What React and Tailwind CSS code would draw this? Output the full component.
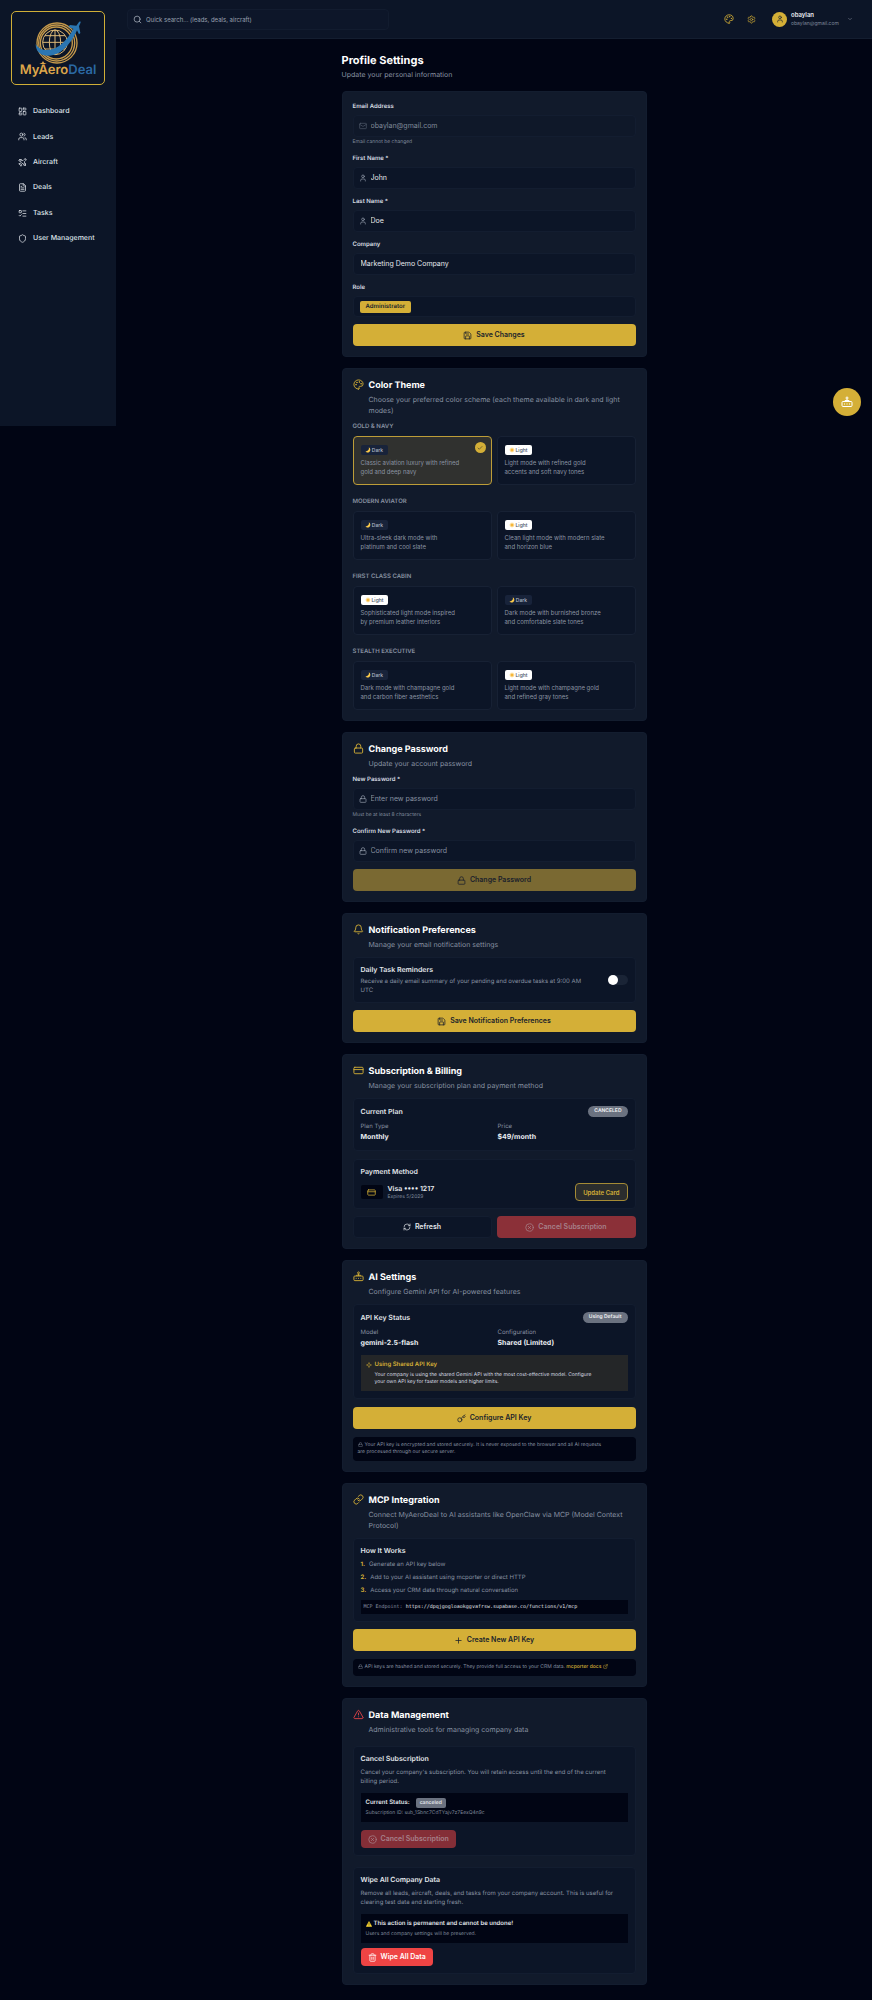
import React from "react";
import {
  Bell,
  Check,
  ChevronDown,
  CircleX,
  CreditCard,
  ExternalLink,
  FileText,
  Key,
  LayoutDashboard,
  Link,
  ListTodo,
  Lock,
  Mail,
  Palette,
  Plus,
  RefreshCw,
  Save,
  Search,
  Settings,
  Shield,
  Sparkle,
  Trash2,
  TriangleAlert,
  User,
  Users,
} from "lucide-react";

const BotIcon = ({ className }) => (
  <svg viewBox="0 0 24 24" fill="none" stroke="currentColor" strokeWidth="2" strokeLinejoin="round" className={className}>
    <circle cx="12" cy="4" r="2" />
    <path d="M12 6v5M8 11V9h8v2M4 11h16a2 2 0 0 1 2 2v6a2 2 0 0 1-2 2H4a2 2 0 0 1-2-2v-6a2 2 0 0 1 2-2z" />
    <path d="M7 15v2M12 15v2M17 15v2" />
  </svg>
);

const JetIcon = ({ className }) => (
  <svg viewBox="0 0 24 24" fill="none" stroke="currentColor" strokeWidth="2" strokeLinecap="round" strokeLinejoin="round" className={className}>
    <path d="M21 3c-1.5-1.5-3.5-.5-5 1l-3 3-9-2-2 2 7 4-3 4-3-.5L2 16l4 2 2 4 1.5-1.5L9 17l4-3 4 7 2-2-2-9 3-3c1.5-1.5 2.5-3 1-4z" />
    <path d="M4 4h5M20 15v5" />
  </svg>
);

const WarningIcon = ({ className }) => (
  <svg viewBox="0 0 24 24" className={className}>
    <path d="M12 2 23 22H1z" fill="#fdd835" stroke="#fdd835" strokeWidth="2" strokeLinejoin="round" />
    <path d="M12 9v6M12 18v2" stroke="#3a3000" strokeWidth="3" />
  </svg>
);

const MoonIcon = () => (
  <svg viewBox="0 0 24 24" className="size-[6px]">
    <path d="M15 1c3 9-3 16-13 16 3 5 9 7 14 4 8-5 7-16-1-20z" fill="#fbc94a" />
  </svg>
);

const SunIcon = () => (
  <svg viewBox="0 0 24 24" className="size-[6px]">
    <path d="M12 0l3 4 5-1-1 5 5 4-5 3 1 5-5-1-3 5-3-5-5 1 1-5-5-3 5-4-1-5 5 1z" fill="#fde7b0" />
    <circle cx="12" cy="12" r="6" fill="#f6b73c" />
  </svg>
);

const navItems = [
  { label: "Dashboard", icon: LayoutDashboard },
  { label: "Leads", icon: Users },
  { label: "Aircraft", icon: JetIcon },
  { label: "Deals", icon: FileText },
  { label: "Tasks", icon: ListTodo },
  { label: "User Management", icon: Shield },
];

const themeGroups = [
  {
    title: "GOLD & NAVY",
    themes: [
      { mode: "Dark", text: "Classic aviation luxury with refined\ngold and deep navy", active: true },
      { mode: "Light", text: "Light mode with refined gold\naccents and soft navy tones" },
    ],
  },
  {
    title: "MODERN AVIATOR",
    themes: [
      { mode: "Dark", text: "Ultra-sleek dark mode with\nplatinum and cool slate" },
      { mode: "Light", text: "Clean light mode with modern slate\nand horizon blue" },
    ],
  },
  {
    title: "FIRST CLASS CABIN",
    themes: [
      { mode: "Light", text: "Sophisticated light mode inspired\nby premium leather interiors" },
      { mode: "Dark", text: "Dark mode with burnished bronze\nand comfortable slate tones" },
    ],
  },
  {
    title: "STEALTH EXECUTIVE",
    themes: [
      { mode: "Dark", text: "Dark mode with champagne gold\nand carbon fiber aesthetics" },
      { mode: "Light", text: "Light mode with champagne gold\nand refined gray tones" },
    ],
  },
];

const steps = [
  "Generate an API key below",
  "Add to your AI assistant using mcporter or direct HTTP",
  "Access your CRM data through natural conversation",
];

const Logo = () => (
  <a href="#" className="flex h-[74px] flex-col items-center rounded-[5px] border border-[#d0ae37] pt-2">
    <svg viewBox="100 58 150 132" className="h-[44px] w-[50px]" fill="none">
      <g stroke="#c79a4b" strokeWidth="4">
        <circle cx="172" cy="127" r="60" />
        <circle cx="171" cy="127" r="54" />
        <circle cx="170" cy="127" r="48" />
      </g>
      <g stroke="#dcb878" strokeWidth="3">
        <circle cx="166" cy="125" r="37" />
        <ellipse cx="166" cy="125" rx="17" ry="37" />
        <path d="M166 88v74M129 125h74M136 105h60M136 145h60" />
      </g>
      <path
        d="M108 130c10 20 42 26 70 6 20-14 34-34 43-51l-15-7 5-5 19 2 6-8c4-6 9-6 6 1l-4 9 4 20-4 4-6-12c-10 24-27 49-50 65-32 20-74 14-74-24z"
        fill="#2b76b2"
      />
      <path d="M130 181l3 5 8 4h-22l8-4z" fill="#dda64a" />
    </svg>
    <span className="text-[13px] leading-[12px] font-semibold text-[#dda64a]">
      MyAero<span className="text-[#2b69a3]">Deal</span>
    </span>
  </a>
);

const Sidebar = () => (
  <aside className="h-[426px] w-[116px] shrink-0 bg-[#0c1527] p-[11px]">
    <Logo />
    <nav className="mt-4 flex h-[148px] flex-col justify-between">
      {navItems.map(({ label, icon: Icon }) => (
        <a key={label} href="#" className="flex h-[21px] items-center gap-[6px] px-[7px] text-[7px] font-medium text-[#dfe3e9]">
          <Icon className="size-[9px]" />
          {label}
        </a>
      ))}
    </nav>
  </aside>
);

const Header = () => (
  <header className="flex h-[39px] items-center justify-between border-b border-[#141e30] bg-[#0c1527] pr-[19px] pl-[11px]">
    <label className="flex h-[21px] w-[262px] items-center gap-1 rounded-[4px] border border-[#121c2f] bg-[#0d1629] px-[5px]">
      <Search className="size-[9px] text-[#a9b1be]" />
      <input
        type="search"
        aria-label="Quick search"
        placeholder="Quick search... (leads, deals, aircraft)"
        className="min-w-0 flex-1 text-[6px] outline-none placeholder:text-[#99a1af]"
      />
    </label>
    <div className="flex items-center">
      <button aria-label="Theme" className="text-[#d4af37]">
        <Palette className="size-[10px]" />
      </button>
      <button aria-label="Settings" className="ml-[13px] text-[#c4a234]">
        <Settings className="size-[9px]" />
      </button>
      <button className="ml-4 flex items-center gap-1 text-left">
        <span className="flex size-[15px] items-center justify-center rounded-full bg-[#d4af37] text-[#141c2c]">
          <User className="size-[8px]" />
        </span>
        <span className="block w-[52px]">
          <span className="block text-[6px] leading-[8px] font-semibold text-[#e8ebf0]">obaylan</span>
          <span className="block text-[5px] leading-[8px] text-[#7f899a]">obaylan@gmail.com</span>
        </span>
        <ChevronDown className="size-[6px] text-[#8a93a2]" />
      </button>
    </div>
  </header>
);

const Card = ({ children }) => (
  <section className="rounded-[4px] border border-[#131d2f] bg-[#111a2b] p-[10px]">{children}</section>
);

const CardHeader = ({ icon: Icon, title, subtitle, iconClass = "text-[#d4af37]" }) => (
  <div className="flex gap-[5px]">
    <Icon strokeWidth={2} className={`size-[11px] shrink-0 ${iconClass}`} />
    <div>
      <h2 className="text-[9px] leading-[14px] font-bold text-white">{title}</h2>
      <p className="mt-px text-[7px] leading-[11px] text-[#8791a1]">{subtitle}</p>
    </div>
  </div>
);

const Panel = ({ children, className = "" }) => (
  <div className={`rounded-[4px] border border-[#131d30] bg-[#0c1527] p-[7px] ${className}`}>{children}</div>
);

const PanelTitle = ({ children }) => (
  <h3 className="text-[7px] leading-[10px] font-semibold text-[#e2e5ea]">{children}</h3>
);

const Field = ({ id, label, icon: Icon, hint, ...props }) => (
  <div>
    <label htmlFor={id} className="block text-[6px] leading-[10px] font-semibold text-[#d6dae1]">
      {label}
    </label>
    <div
      className={`mt-[3px] flex h-[22px] items-center gap-1 rounded-[4px] border border-[#131d30] ${
        Icon ? "px-[5px]" : "px-[7px]"
      } ${props.disabled ? "bg-[#0f1829] text-[#7f8898]" : "bg-[#0c1527] text-[#e4e7ec]"}`}
    >
      {Icon && <Icon className={`size-[8px] shrink-0 ${props.disabled ? "text-[#525c6d]" : "text-[#98a1b0]"}`} />}
      <input id={id} className="min-w-0 flex-1 text-[7px] outline-none placeholder:text-[#8791a1]" {...props} />
    </div>
    {hint && <p className="mt-[2px] text-[5px] leading-[7px] text-[#7f899a]">{hint}</p>}
  </div>
);

const GoldButton = ({ icon: Icon, children, className = "mt-[7px]", disabled }) => (
  <button
    disabled={disabled}
    className={`flex h-[22px] w-full items-center justify-center gap-1 rounded-[4px] text-[7px] font-semibold text-[#1a1f2b] ${
      disabled ? "bg-[#7a6932]" : "bg-[#d4af37]"
    } ${className}`}
  >
    <Icon className="size-[9px]" />
    {children}
  </button>
);

const Note = ({ children }) => (
  <p className="mt-2 rounded-[4px] bg-[#010514] px-[5px] py-[5px] text-[5px] leading-[7px] text-[#8791a1]">
    <Lock className="mr-[2px] inline size-[5px] align-[-1px]" />
    {children}
  </p>
);

const Stat = ({ label, value }) => (
  <div>
    <dt className="text-[6px] leading-[9px] text-[#8791a1]">{label}</dt>
    <dd className="mt-px text-[7px] leading-[10px] font-bold text-[#e8ebf0]">{value}</dd>
  </div>
);

const Pill = ({ children }) => (
  <span className="rounded-full bg-[#6b7280] px-[6px] text-[5px] leading-[11px] font-semibold text-[#f0f1f3]">{children}</span>
);

const ThemeOption = ({ mode, text, active }) => (
  <button
    aria-pressed={!!active}
    className={`relative block rounded-[4px] border px-[7px] py-2 text-left ${
      active ? "border-[#bd9d38] bg-[#30312f]" : "border-[#172134] bg-[#0c1527]"
    }`}
  >
    <span
      className={`flex h-[10px] w-[27px] items-center justify-center gap-px rounded-[2px] text-[5px] leading-[10px] font-medium ${
        mode === "Dark" ? "bg-[#18233a] text-[#b4bbc7]" : "bg-white text-[#475064]"
      }`}
    >
      {mode === "Dark" ? <MoonIcon /> : <SunIcon />}
      {mode}
    </span>
    <span className="mt-[3px] block text-[6px] leading-[9px] whitespace-pre-line text-[#8b94a2]">{text}</span>
    {active && (
      <span className="absolute top-[5px] right-[5px] flex size-[11px] items-center justify-center rounded-full bg-[#d4af37] text-[#1a1f2b]">
        <Check className="size-[6px]" />
      </span>
    )}
  </button>
);

const ProfileForm = () => (
  <Card>
    <div className="flex flex-col gap-2">
      <Field id="email" label="Email Address" icon={Mail} defaultValue="obaylan@gmail.com" hint="Email cannot be changed" disabled />
      <Field id="first" label="First Name *" icon={User} defaultValue="John" />
      <Field id="last" label="Last Name *" icon={User} defaultValue="Doe" />
      <Field id="company" label="Company" defaultValue="Marketing Demo Company" />
      <div>
        <p className="text-[6px] leading-[10px] font-semibold text-[#d6dae1]">Role</p>
        <div className="mt-[3px] flex h-[21px] items-center rounded-[4px] border border-[#131d30] bg-[#0c1527] px-[6px]">
          <span className="rounded-[2px] bg-[#d4af37] px-[6px] text-[6px] leading-[12px] font-semibold text-[#1a1f2b]">Administrator</span>
        </div>
      </div>
    </div>
    <GoldButton icon={Save}>Save Changes</GoldButton>
  </Card>
);

const ColorTheme = () => (
  <Card>
    <CardHeader
      icon={Palette}
      title="Color Theme"
      subtitle="Choose your preferred color scheme (each theme available in dark and light modes)"
    />
    <div className="mt-[6px] flex flex-col gap-3">
      {themeGroups.map((group) => (
        <div key={group.title}>
          <h3 className="text-[6px] leading-[10px] font-semibold text-[#8791a1]">{group.title}</h3>
          <div className="mt-1 grid grid-cols-2 gap-[5px]">
            {group.themes.map((theme) => (
              <ThemeOption key={theme.text} {...theme} />
            ))}
          </div>
        </div>
      ))}
    </div>
  </Card>
);

const ChangePassword = () => (
  <Card>
    <CardHeader icon={Lock} title="Change Password" subtitle="Update your account password" />
    <div className="mt-[6px] flex flex-col gap-2">
      <Field
        id="new-password"
        type="password"
        label="New Password *"
        icon={Lock}
        placeholder="Enter new password"
        hint="Must be at least 8 characters"
      />
      <Field id="confirm-password" type="password" label="Confirm New Password *" icon={Lock} placeholder="Confirm new password" />
    </div>
    <GoldButton icon={Lock} disabled>
      Change Password
    </GoldButton>
  </Card>
);

const Notifications = () => (
  <Card>
    <CardHeader icon={Bell} title="Notification Preferences" subtitle="Manage your email notification settings" />
    <Panel className="mt-[7px] flex items-center justify-between">
      <label htmlFor="reminders" className="block w-[238px]">
        <span className="block text-[7px] leading-[10px] font-semibold text-[#e2e5ea]">Daily Task Reminders</span>
        <span className="mt-[2px] block text-[6px] leading-[9px] text-[#8791a1]">
          Receive a daily email summary of your pending and overdue tasks at 9:00 AM
          <br />
          UTC
        </span>
      </label>
      <input
        id="reminders"
        type="checkbox"
        role="switch"
        className="h-[10px] w-5 shrink-0 appearance-none rounded-full bg-[#1a2436] before:block before:size-[10px] before:rounded-full before:bg-white checked:bg-[#d4af37]"
      />
    </Panel>
    <GoldButton icon={Save}>Save Notification Preferences</GoldButton>
  </Card>
);

const Billing = () => (
  <Card>
    <CardHeader icon={CreditCard} title="Subscription & Billing" subtitle="Manage your subscription plan and payment method" />
    <Panel className="mt-[7px]">
      <div className="flex items-center justify-between">
        <PanelTitle>Current Plan</PanelTitle>
        <Pill>CANCELED</Pill>
      </div>
      <dl className="mt-[5px] mb-px grid grid-cols-2 gap-[7px]">
        <Stat label="Plan Type" value="Monthly" />
        <Stat label="Price" value="$49/month" />
      </dl>
    </Panel>
    <Panel className="mt-2">
      <PanelTitle>Payment Method</PanelTitle>
      <div className="mt-[6px] flex items-center">
        <span className="flex h-[14px] w-[22px] items-center justify-center rounded-[2px] bg-[#010514] text-[#d4af37]">
          <CreditCard className="size-[9px]" />
        </span>
        <div className="ml-[5px] flex-1">
          <p className="text-[7px] leading-[10px] font-semibold text-[#e8ebf0]">Visa •••• 1217</p>
          <p className="text-[5px] leading-[7px] text-[#7f899a]">Expires 5/2029</p>
        </div>
        <button className="h-[18px] rounded-[4px] border border-[#a58b35] bg-[#2b2d2d] px-[7px] text-[6px] font-semibold text-[#d4af37]">
          Update Card
        </button>
      </div>
    </Panel>
    <div className="mt-[7px] grid grid-cols-2 gap-[5px]">
      <button className="flex h-[22px] items-center justify-center gap-1 rounded-[4px] border border-[#131d30] bg-[#0c1527] text-[7px] font-semibold text-[#e2e5ea]">
        <RefreshCw className="size-[8px]" />
        Refresh
      </button>
      <button disabled className="flex h-[22px] items-center justify-center gap-1 rounded-[4px] bg-[#8b3038] text-[7px] font-semibold text-[#a6808a]">
        <CircleX className="size-[9px]" />
        Cancel Subscription
      </button>
    </div>
  </Card>
);

const AiSettings = () => (
  <Card>
    <CardHeader icon={BotIcon} title="AI Settings" subtitle="Configure Gemini API for AI-powered features" />
    <Panel className="mt-[7px]">
      <div className="flex items-center justify-between">
        <PanelTitle>API Key Status</PanelTitle>
        <Pill>Using Default</Pill>
      </div>
      <dl className="mt-[5px] grid grid-cols-2 gap-[7px]">
        <Stat label="Model" value="gemini-2.5-flash" />
        <Stat label="Configuration" value="Shared (Limited)" />
      </dl>
      <div className="mt-[7px] flex gap-[3px] bg-[#242628] px-[5px] py-[5px]">
        <Sparkle className="mt-[2px] size-[6px] shrink-0 text-[#d4af37]" />
        <div>
          <p className="text-[6px] leading-[10px] font-semibold text-[#d4af37]">Using Shared API Key</p>
          <p className="mt-[2px] text-[5px] leading-[7px] text-[#d6dae1]">
            Your company is using the shared Gemini API with the most cost-effective model. Configure
            <br />
            your own API key for faster models and higher limits.
          </p>
        </div>
      </div>
    </Panel>
    <GoldButton icon={Key} className="mt-2">
      Configure API Key
    </GoldButton>
    <Note>
      Your API key is encrypted and stored securely. It is never exposed to the browser and all AI requests
      <br />
      are processed through our secure server.
    </Note>
  </Card>
);

const McpIntegration = () => (
  <Card>
    <CardHeader
      icon={Link}
      title="MCP Integration"
      subtitle="Connect MyAeroDeal to AI assistants like OpenClaw via MCP (Model Context Protocol)"
    />
    <Panel className="mt-[7px]">
      <PanelTitle>How It Works</PanelTitle>
      <ol className="mt-1 flex flex-col gap-1">
        {steps.map((step, index) => (
          <li key={step} className="flex gap-1 text-[6px] leading-[9px] text-[#8791a1]">
            <span className="font-bold text-[#d4af37]">{index + 1}.</span>
            {step}
          </li>
        ))}
      </ol>
      <p className="mt-[5px] bg-[#010514] px-[3px] font-['DejaVu_Sans_Mono',monospace] text-[5px] leading-[14px] text-[#8791a1]">
        MCP Endpoint: <code className="font-['DejaVu_Sans_Mono',monospace] text-[#e2e5ea]">https://dpqjgogloaokggvafrsw.supabase.co/functions/v1/mcp</code>
      </p>
    </Panel>
    <GoldButton icon={Plus}>Create New API Key</GoldButton>
    <Note>
      API keys are hashed and stored securely. They provide full access to your CRM data.{" "}
      <a href="#" className="font-medium text-[#d4af37]">
        mcporter docs <ExternalLink className="inline size-[5px] align-[-1px]" />
      </a>
    </Note>
  </Card>
);

const DataManagement = () => (
  <Card>
    <CardHeader
      icon={TriangleAlert}
      iconClass="text-[#e04348]"
      title="Data Management"
      subtitle="Administrative tools for managing company data"
    />
    <Panel className="mt-[11px]">
      <PanelTitle>Cancel Subscription</PanelTitle>
      <p className="mt-1 text-[6px] leading-[9px] text-[#8791a1]">
        Cancel your company's subscription. You will retain access until the end of the current
        <br />
        billing period.
      </p>
      <div className="mt-[7px] bg-[#010514] px-[5px] py-[5px]">
        <p className="flex gap-[6px] text-[6px] leading-[10px] font-semibold text-[#e2e5ea]">
          Current Status:
          <span className="rounded-[2px] bg-[#6b7280] px-1 text-[5px]">canceled</span>
        </p>
        <p className="mt-px text-[5px] leading-[8px] text-[#7f899a]">Subscription ID: sub_1Sbnc7CdTYajv7z7EexQ4n9c</p>
      </div>
      <button disabled className="mt-2 flex h-[18px] items-center gap-1 rounded-[4px] bg-[#842e37] px-[7px] text-[7px] font-semibold text-[#a6808a]">
        <CircleX className="size-[9px]" />
        Cancel Subscription
      </button>
    </Panel>
    <Panel className="mt-[11px]">
      <PanelTitle>Wipe All Company Data</PanelTitle>
      <p className="mt-1 text-[6px] leading-[9px] text-[#8791a1]">
        Remove all leads, aircraft, deals, and tasks from your company account. This is useful for
        <br />
        clearing test data and starting fresh.
      </p>
      <div className="mt-[7px] bg-[#010514] px-[5px] py-[5px]">
        <p className="flex items-center gap-[2px] text-[6px] leading-[10px] font-semibold text-[#e2e5ea]">
          <WarningIcon className="size-[6px]" />
          This action is permanent and cannot be undone!
        </p>
        <p className="mt-px text-[5px] leading-[8px] text-[#7f899a]">Users and company settings will be preserved.</p>
      </div>
      <button className="mt-[5px] flex h-[18px] items-center gap-1 rounded-[4px] bg-[#ef4444] px-[7px] text-[7px] font-semibold text-white">
        <Trash2 className="size-[9px]" />
        Wipe All Data
      </button>
    </Panel>
  </Card>
);

export default function App() {
  return (
    <div className="relative flex min-h-screen items-start bg-[#010514] font-['Inter',sans-serif] [text-rendering:geometricPrecision]">
      <Sidebar />
      <div className="min-w-0 flex-1">
        <Header />
        <main className="mx-auto flex max-w-[305px] flex-col gap-[11px] pt-[14px] pb-[15px]">
          <div>
            <h1 className="text-[11px] leading-[15px] font-bold text-white">Profile Settings</h1>
            <p className="mt-px text-[7px] leading-[11px] text-[#8791a1]">Update your personal information</p>
          </div>
          <ProfileForm />
          <ColorTheme />
          <ChangePassword />
          <Notifications />
          <Billing />
          <AiSettings />
          <McpIntegration />
          <DataManagement />
        </main>
      </div>
      <button
        aria-label="AI assistant"
        className="absolute top-[388px] right-[11px] flex size-[28px] items-center justify-center rounded-full bg-[#d4af37] text-white"
      >
        <BotIcon className="size-[12px]" />
      </button>
    </div>
  );
}
